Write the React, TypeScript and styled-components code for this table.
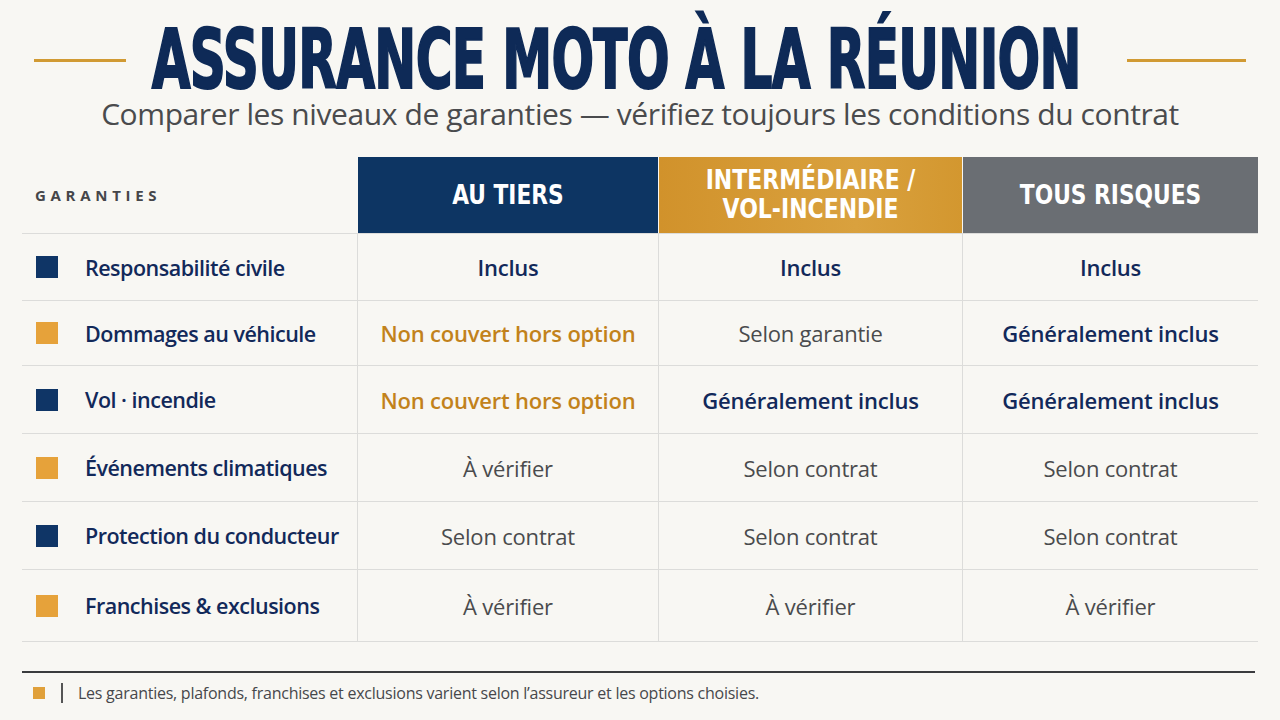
import React from "react";
import styled, { createGlobalStyle } from "styled-components";

const Global = createGlobalStyle`
  html, body { margin: 0; padding: 0; background: #f8f7f3; }
  body { font-family: "Open Sans", "Noto Sans", sans-serif; }
  * { box-sizing: border-box; }
`;

const Page = styled.div`
  width: 1280px;
  height: 720px;
  background: #f8f7f3;
  overflow: hidden;
  display: flex;
  flex-direction: column;
`;

const TitleRow = styled.div`
  display: flex;
  align-items: center;
  justify-content: center;
  height: 92px;
  padding-top: 29px;
`;

const Rule = styled.div<{ $w: number }>`
  width: ${(p) => p.$w}px;
  height: 3px;
  background: #d19a33;
  flex: none;
`;

const TitleBox = styled.div`
  width: 925px;
  flex: none;
  margin: 0 48px 0 28px;
  display: flex;
  justify-content: center;
`;

const Title = styled.h1`
  margin: 0;
  font-family: "DejaVu Sans Condensed", "DejaVu Sans", sans-serif;
  font-weight: 700;
  font-size: 82px;
  line-height: 0.74;
  color: #0e2a57;
  white-space: nowrap;
  display: inline-block;
  flex: none;
  transform: scaleX(0.68);
  letter-spacing: -1px;
  -webkit-text-stroke: 2px #0e2a57;
`;

const Subtitle = styled.div`
  text-align: center;
  font-family: "Open Sans", sans-serif;
  font-size: 30px;
  color: #4a4b4d;
  margin-top: 1px;
  letter-spacing: -0.4px;
`;

const Table = styled.div`
  margin: 23px 22px 0 22px;
  width: 1236px;
  display: grid;
  grid-template-columns: 335px 301px 304px 296px;
`;

const HeadLabel = styled.div`
  height: 76px;
  display: flex;
  align-items: center;
  padding-left: 13px;
  font-family: "Open Sans", sans-serif;
  font-weight: 700;
  font-size: 15px;
  letter-spacing: 4.7px;
  color: #45464a;
`;

const HeadCell = styled.div<{ $bg: string }>`
  height: 76px;
  background: ${(p) => p.$bg};
  display: flex;
  align-items: center;
  justify-content: center;
  text-align: center;
  color: #fff;
  font-family: "DejaVu Sans Condensed", "DejaVu Sans", sans-serif;
  font-weight: 700;
  font-size: 26px;
  line-height: 29px;
  border-left: 1px solid #f8f7f3;
`;

const HeadText = styled.span<{ $sx?: number }>`
  display: inline-block;
  transform: scaleX(${(p) => p.$sx ?? 0.93});
  white-space: nowrap;
`;

const LabelCell = styled.div<{ $h: number }>`
  height: ${(p) => p.$h}px;
  border-top: 1px solid #dcdcda;
  display: flex;
  align-items: center;
  padding-left: 14px;
  gap: 27px;
  font-family: "Open Sans", sans-serif;
  font-weight: 600;
  font-size: 21.5px;
  color: #12295a;
  letter-spacing: -0.5px;
`;

const Marker = styled.span<{ $c: string }>`
  width: 22px;
  height: 22px;
  background: ${(p) => p.$c};
  flex: none;
`;

const ValueCell = styled.div<{ $h: number; $tone: "navy" | "gold" | "grey" }>`
  height: ${(p) => p.$h}px;
  border-top: 1px solid #dcdcda;
  border-left: 1px solid #dcdcda;
  display: flex;
  align-items: center;
  justify-content: center;
  font-family: "Open Sans", sans-serif;
  font-size: 22px;
  letter-spacing: -0.2px;
  font-weight: ${(p) => (p.$tone === "grey" ? 400 : 600)};
  color: ${(p) =>
    p.$tone === "navy" ? "#12295a" : p.$tone === "gold" ? "#c2821b" : "#4a4b4d"};
`;

const TableEnd = styled.div`
  grid-column: 1 / -1;
  border-top: 1px solid #dcdcda;
`;

const FootRule = styled.div`
  margin: 29px 25px 0 22px;
  height: 2px;
  background: #3a3b3d;
`;

const Footer = styled.div`
  display: flex;
  align-items: center;
  padding-left: 33px;
  margin-top: 9px;
  font-family: "Open Sans", sans-serif;
  font-size: 16px;
  color: #47484b;
  letter-spacing: -0.25px;
`;

const FootSquare = styled.span`
  width: 12px;
  height: 12px;
  background: #e0a03a;
  flex: none;
`;

const FootBar = styled.span`
  width: 2px;
  height: 20px;
  background: #555;
  margin: 0 15px 0 16px;
  flex: none;
`;

type Tone = "navy" | "gold" | "grey";
const rows: { label: string; c: string; h: number; v: [string, Tone][] }[] = [
  { label: "Responsabilité civile", c: "#0f3566", h: 67, v: [["Inclus", "navy"], ["Inclus", "navy"], ["Inclus", "navy"]] },
  { label: "Dommages au véhicule", c: "#e6a23a", h: 65, v: [["Non couvert hors option", "gold"], ["Selon garantie", "grey"], ["Généralement inclus", "navy"]] },
  { label: "Vol · incendie", c: "#0f3566", h: 68, v: [["Non couvert hors option", "gold"], ["Généralement inclus", "navy"], ["Généralement inclus", "navy"]] },
  { label: "Événements climatiques", c: "#e6a23a", h: 68, v: [["À vérifier", "grey"], ["Selon contrat", "grey"], ["Selon contrat", "grey"]] },
  { label: "Protection du conducteur", c: "#0f3566", h: 68, v: [["Selon contrat", "grey"], ["Selon contrat", "grey"], ["Selon contrat", "grey"]] },
  { label: "Franchises & exclusions", c: "#e6a23a", h: 72, v: [["À vérifier", "grey"], ["À vérifier", "grey"], ["À vérifier", "grey"]] },
];

export default function App() {
  return (
    <Page>
      <Global />
      <TitleRow>
        <Rule $w={92} />
        <TitleBox>
          <Title>ASSURANCE MOTO À LA RÉUNION</Title>
        </TitleBox>
        <Rule $w={119} />
      </TitleRow>
      <Subtitle>Comparer les niveaux de garanties — vérifiez toujours les conditions du contrat</Subtitle>
      <Table>
        <HeadLabel>GARANTIES</HeadLabel>
        <HeadCell $bg="#0d3563"><HeadText>AU TIERS</HeadText></HeadCell>
        <HeadCell $bg="linear-gradient(90deg, #d1922b, #d9a13e 65%, #d3972f)">
          <HeadText $sx={0.94}>INTERMÉDIAIRE /<br />VOL-INCENDIE</HeadText>
        </HeadCell>
        <HeadCell $bg="#6a6e73"><HeadText>TOUS RISQUES</HeadText></HeadCell>
        {rows.map((r) => (
          <React.Fragment key={r.label}>
            <LabelCell $h={r.h}>
              <Marker $c={r.c} />
              {r.label}
            </LabelCell>
            {r.v.map(([t, tone], i) => (
              <ValueCell key={i} $h={r.h} $tone={tone}>{t}</ValueCell>
            ))}
          </React.Fragment>
        ))}
        <TableEnd />
      </Table>
      <FootRule />
      <Footer>
        <FootSquare />
        <FootBar />
        Les garanties, plafonds, franchises et exclusions varient selon l’assureur et les options choisies.
      </Footer>
    </Page>
  );
}
